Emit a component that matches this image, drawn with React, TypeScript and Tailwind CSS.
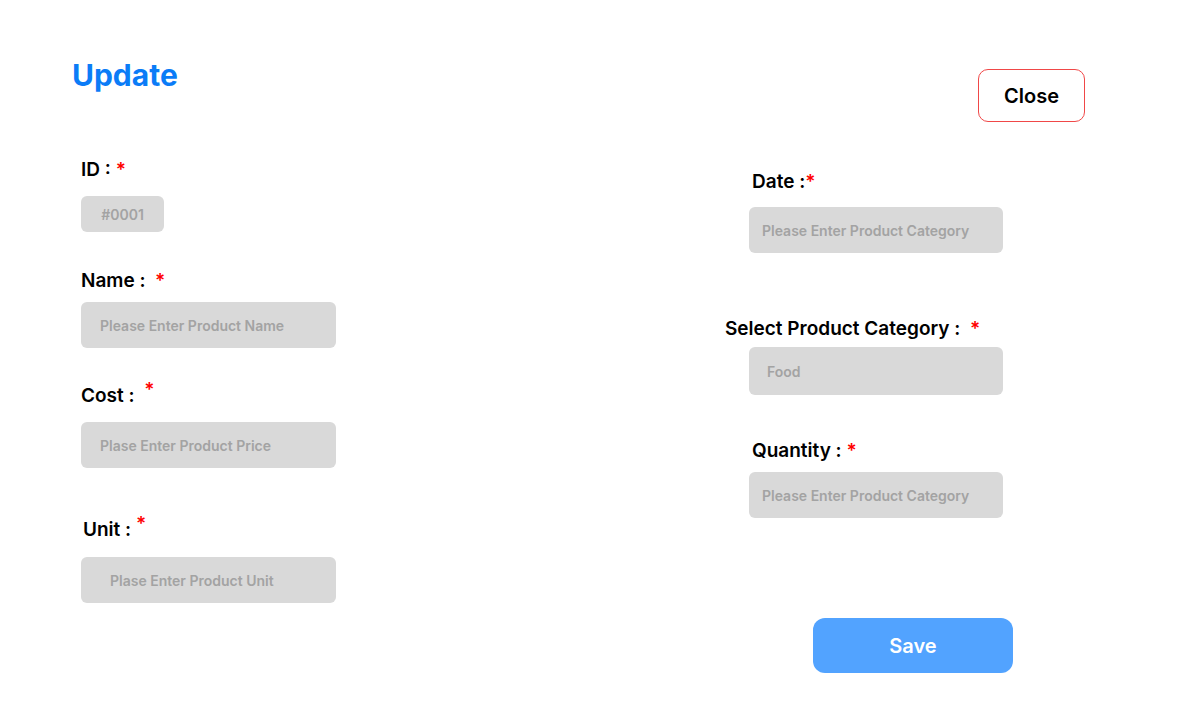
import React from "react";

const Star = ({ raised = false }: { raised?: boolean }) => (
  <span className={`text-[#ff0000] ${raised ? "relative -top-[6px]" : ""}`}>*</span>
);

const Field = ({ text, className }: { text: string; className: string }) => (
  <div
    className={`flex items-center rounded-[6px] bg-[#d9d9d9] text-[14px] font-semibold text-[#a3a3a3] ${className}`}
  >
    {text}
  </div>
);

export default function App() {
  return (
    <main className="min-h-screen w-full bg-white font-['Inter',sans-serif] text-black">
      {/* Header */}
      <div className="flex items-start justify-between pl-[72px] pr-[111px] pt-[57px]">
        <h1 className="text-[30px] font-bold leading-[36px] text-[#0b7cf7]">Update</h1>
        <button
          type="button"
          className="mt-[12px] flex h-[53px] w-[107px] items-center justify-center rounded-[10px] border border-[#f04848] text-[20px] font-semibold"
        >
          Close
        </button>
      </div>

      {/* Body */}
      <div className="flex">
        {/* Left column */}
        <div className="flex w-[725px] flex-col items-start pl-[81px]">
          <label className="mt-[36px] text-[19px] font-semibold leading-[23px]">
            ID : <Star />
          </label>
          <Field text="#0001" className="mt-[15px] h-[36px] w-[83px] justify-center" />

          <label className="mt-[37px] text-[19px] font-semibold leading-[23px]">
            Name :&nbsp; <Star />
          </label>
          <Field text="Please Enter Product Name" className="mt-[10px] h-[46px] w-[255px] pl-[19px]" />

          <label className="mt-[36px] text-[19px] font-semibold leading-[23px]">
            Cost :&nbsp; <Star raised />
          </label>
          <Field text="Plase Enter Product Price" className="mt-[15px] h-[46px] w-[255px] pl-[19px]" />

          <label className="ml-[2px] mt-[50px] text-[19px] font-semibold leading-[23px]">
            Unit : <Star raised />
          </label>
          <Field text="Plase Enter Product Unit" className="mt-[16px] h-[46px] w-[255px] pl-[29px]" />
        </div>

        {/* Right column */}
        <div className="flex flex-col items-start">
          <label className="ml-[27px] mt-[48px] text-[19px] font-semibold leading-[23px]">
            Date :<Star />
          </label>
          <Field text="Please Enter Product Category" className="ml-[24px] mt-[14px] h-[46px] w-[254px] pl-[13px]" />

          <label className="mt-[64px] whitespace-pre text-[19px] font-semibold leading-[23px]">
            {"Select Product Category :  "}
            <Star />
          </label>
          <Field text="Food" className="ml-[24px] mt-[7px] h-[48px] w-[254px] pl-[18px]" />

          <label className="ml-[27px] mt-[44px] text-[19px] font-semibold leading-[23px]">
            Quantity :&nbsp;<Star />
          </label>
          <Field text="Please Enter Product Category" className="ml-[24px] mt-[10px] h-[46px] w-[254px] pl-[13px]" />

          <button
            type="button"
            className="ml-[88px] mt-[100px] flex h-[55px] w-[200px] items-center justify-center rounded-[12px] bg-[#52a3ff] text-[20px] font-semibold text-white"
          >
            Save
          </button>
        </div>
      </div>
    </main>
  );
}
